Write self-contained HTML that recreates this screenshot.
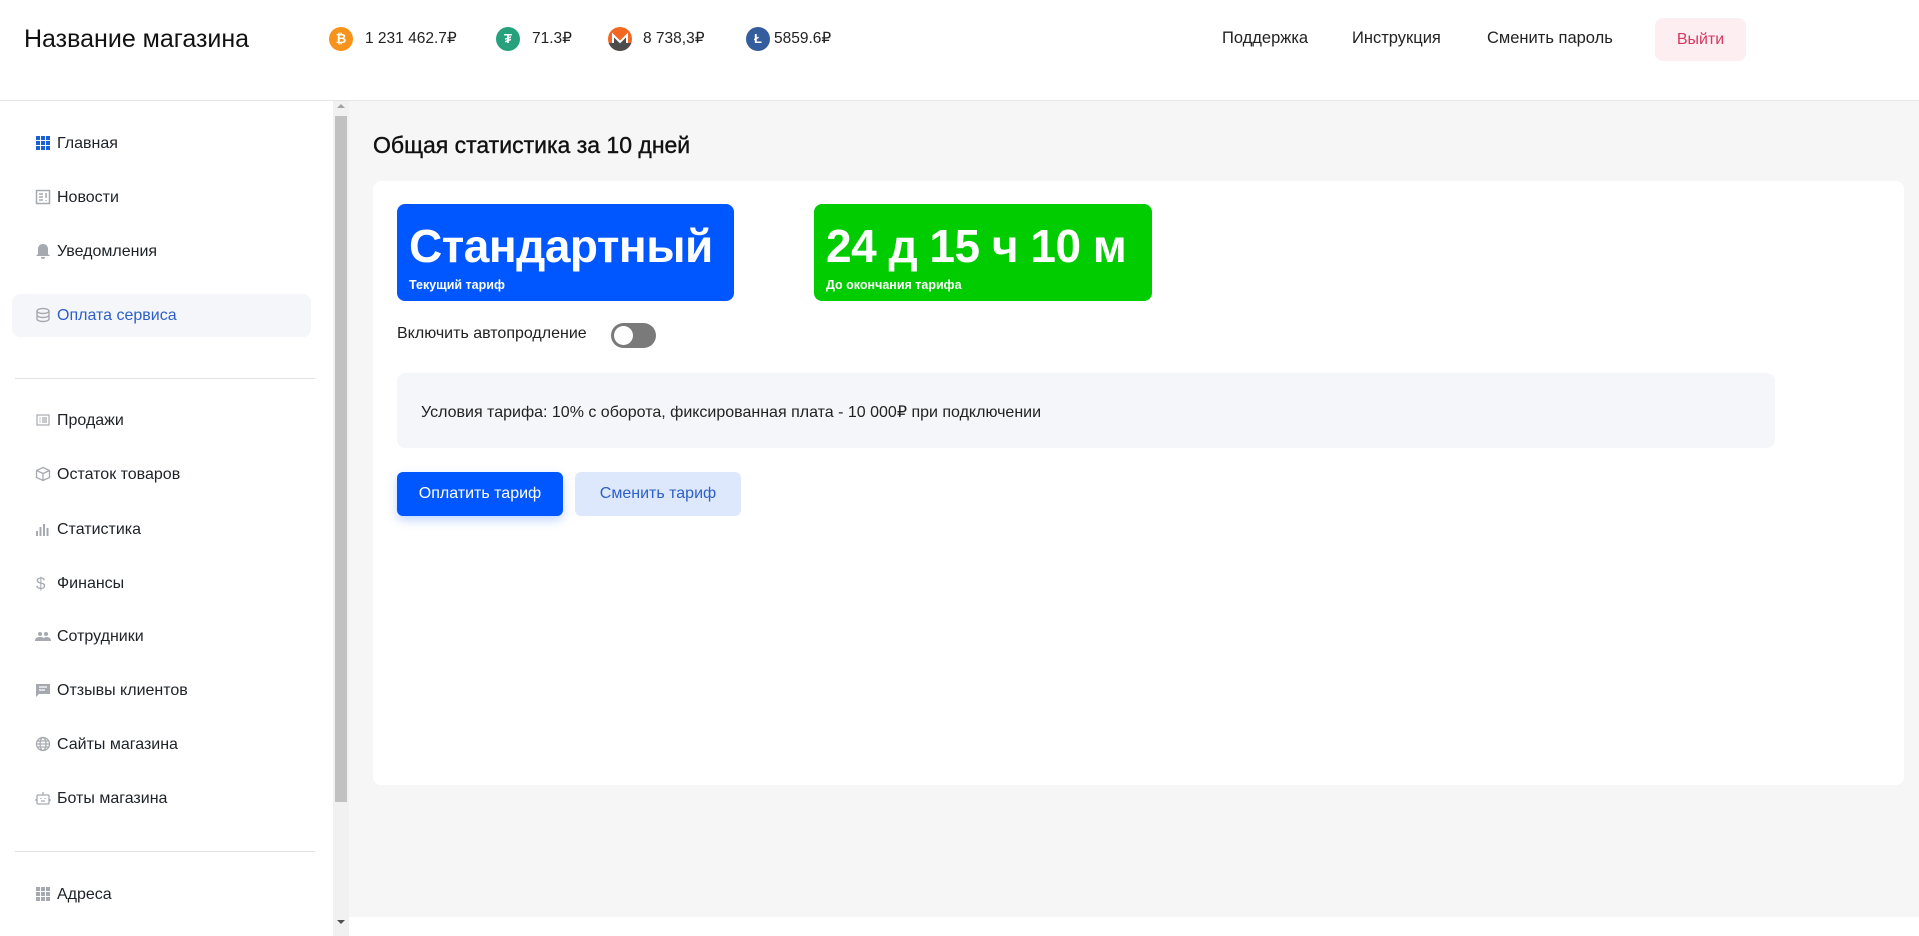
<!DOCTYPE html>
<html><head><meta charset="utf-8"><style>
*{box-sizing:border-box;margin:0;padding:0}
body{width:1919px;height:936px;overflow:hidden;background:#fff;font-family:"Liberation Sans",sans-serif;color:#1e2227;position:relative}
.abs{position:absolute}
.hdr{left:0;top:0;width:1919px;height:101px;border-bottom:1px solid #e6e6e6;background:#fff}
.logo{left:24px;top:25px;font-size:25px;color:#111}
.cr{top:30px;font-size:15.5px;color:#222;line-height:18px}
.ci{top:27px;width:24px;height:24px;border-radius:50%;color:#fff;font-size:13px;font-weight:bold;text-align:center;line-height:24px}
.nav{top:29px;font-size:16.5px;color:#222}
.out{left:1655px;top:18px;width:91px;height:43px;background:#fdeef2;border-radius:8px;color:#d8385f;font-size:16px;text-align:center;line-height:43px}
.side{left:0;top:101px;width:333px;height:835px;background:#fff}
.it{left:35px;font-size:16px;color:#1e2227;height:20px;line-height:20px}
.it span{position:absolute;left:22px;top:1px;white-space:nowrap}
.ic{position:absolute;left:0;top:2px;width:16px;height:16px}
.act{left:12px;top:294px;width:299px;height:43px;background:#f4f6fa;border-radius:8px}
.div{left:15px;width:300px;height:1px;background:#e3e3e3}
.sb{left:333px;top:101px;width:16px;height:835px;background:#f1f1f1}
.th{left:335px;top:116px;width:12px;height:686px;background:#c1c1c1}
.main{left:349px;top:101px;width:1570px;height:816px;background:#f6f6f6}
.title{left:373px;top:132px;font-size:23px;color:#111;-webkit-text-stroke:0.4px #111}
.card{left:373px;top:181px;width:1531px;height:604px;background:#fff;border-radius:8px}
.box{top:204px;width:337px;height:97px;border-radius:8px;color:#fff;overflow:hidden}
.box b{position:absolute;left:12px;top:15px;font-size:46px;line-height:54px;white-space:nowrap;letter-spacing:-0.5px}
.box i{position:absolute;left:12px;top:74px;font-size:12.5px;font-style:normal;font-weight:bold}
</style></head><body>
<div class="abs hdr"></div>
<div class="abs logo">Название магазина</div>
<div class="abs ci" style="left:329px;background:#f7931a">₿</div>
<div class="abs cr" style="left:365px">1 231 462.7₽</div>
<div class="abs ci" style="left:496px;background:#26a17b">₮</div>
<div class="abs cr" style="left:532px">71.3₽</div>
<div class="abs ci" style="left:608px;background:#f26822;overflow:hidden"><svg width="24" height="24" viewBox="0 0 24 24"><path d="M0 16h5V8l7 7 7-7v8h5v8H0z" fill="#4c4c4c"/><path d="M5 16V8l7 7 7-7v8" fill="none" stroke="#fff" stroke-width="2"/></svg></div>
<div class="abs cr" style="left:643px">8 738,3₽</div>
<div class="abs ci" style="left:746px;background:#345d9d">Ł</div>
<div class="abs cr" style="left:774px">5859.6₽</div>
<div class="abs nav" style="left:1222px">Поддержка</div>
<div class="abs nav" style="left:1352px">Инструкция</div>
<div class="abs nav" style="left:1487px">Сменить пароль</div>
<div class="abs out">Выйти</div>

<div class="abs side"></div>
<div class="abs act"></div>
<div class="abs it" style="top:133px"><svg class="ic" viewBox="0 0 16 16" fill="#1a5fd6"><rect x="1" y="1" width="4" height="4"/><rect x="6" y="1" width="4" height="4"/><rect x="11" y="1" width="4" height="4"/><rect x="1" y="6" width="4" height="4"/><rect x="6" y="6" width="4" height="4"/><rect x="11" y="6" width="4" height="4"/><rect x="1" y="11" width="4" height="4"/><rect x="6" y="11" width="4" height="4"/><rect x="11" y="11" width="4" height="4"/></svg><span>Главная</span></div>
<div class="abs it" style="top:187px"><svg class="ic" viewBox="0 0 16 16" fill="none" stroke="#a6aab0" stroke-width="1.5"><rect x="1.5" y="1.5" width="13" height="13"/><path d="M4 5h4M4 8h4M4 11h4M11 4v5M11 11v1"/></svg><span>Новости</span></div>
<div class="abs it" style="top:241px"><svg class="ic" viewBox="0 0 16 16" fill="#a6aab0"><path d="M8 1c-3 0-5 2-5 5v5l-2 2h14l-2-2V6c0-3-2-5-5-5zM6 14h4a2 2 0 0 1-4 0z"/></svg><span>Уведомления</span></div>
<div class="abs it" style="top:305px;color:#2d5fc8"><svg class="ic" viewBox="0 0 16 16" fill="none" stroke="#a6aab0" stroke-width="1.4"><ellipse cx="8" cy="4" rx="6" ry="2.5"/><path d="M2 4v8c0 1.4 2.7 2.5 6 2.5s6-1.1 6-2.5V4M2 8c0 1.4 2.7 2.5 6 2.5S14 9.4 14 8"/></svg><span>Оплата сервиса</span></div>
<div class="abs div" style="top:378px"></div>
<div class="abs it" style="top:410px"><svg class="ic" viewBox="0 0 16 16" fill="none" stroke="#a6aab0" stroke-width="1.2"><rect x="2" y="3" width="12" height="10"/><path d="M4.5 6h1M7 6h5M4.5 8h1M7 8h5M4.5 10h1M7 10h5"/></svg><span>Продажи</span></div>
<div class="abs it" style="top:464px"><svg class="ic" viewBox="0 0 16 16" fill="none" stroke="#a6aab0" stroke-width="1.3"><path d="M8 1.5l6.5 3v7L8 14.5 1.5 11.5v-7zM1.5 4.5L8 7.5l6.5-3M8 7.5v7"/></svg><span>Остаток товаров</span></div>
<div class="abs it" style="top:519px"><svg class="ic" viewBox="0 0 16 16" fill="#a6aab0"><rect x="1" y="10" width="2" height="5"/><rect x="4.5" y="6" width="2" height="9"/><rect x="8" y="3" width="2" height="12"/><rect x="11.5" y="7" width="2" height="8"/></svg><span>Статистика</span></div>
<div class="abs it" style="top:573px"><span style="left:1px;color:#a6aab0;font-size:17px">$</span><span>Финансы</span></div>
<div class="abs it" style="top:626px"><svg class="ic" viewBox="0 0 16 16" fill="#a6aab0"><circle cx="5" cy="6" r="2"/><circle cx="11" cy="6" r="2"/><path d="M0 13c0-3 2-4 5-4s5 1 5 4zM8 13c0-2 1-4 3-4 3 0 5 1 5 4z"/></svg><span>Сотрудники</span></div>
<div class="abs it" style="top:680px"><svg class="ic" viewBox="0 0 16 16" fill="#a6aab0"><path d="M1 2h14v10H4l-3 3z"/><path d="M4 5h8M4 8h6" stroke="#fff" stroke-width="1.2"/></svg><span>Отзывы клиентов</span></div>
<div class="abs it" style="top:734px"><svg class="ic" viewBox="0 0 16 16" fill="none" stroke="#a6aab0" stroke-width="1.3"><circle cx="8" cy="8" r="6.5"/><ellipse cx="8" cy="8" rx="3" ry="6.5"/><path d="M1.5 8h13M2.5 5h11M2.5 11h11"/></svg><span>Сайты магазина</span></div>
<div class="abs it" style="top:788px"><svg class="ic" viewBox="0 0 16 16" fill="none" stroke="#a6aab0" stroke-width="1.3"><rect x="2" y="5" width="12" height="9" rx="1"/><path d="M8 2v3M1 9v2M15 9v2M6 8v1M10 8v1M6 11h4"/></svg><span>Боты магазина</span></div>
<div class="abs div" style="top:851px"></div>
<div class="abs it" style="top:884px"><svg class="ic" viewBox="0 0 16 16" fill="#a6aab0"><rect x="1" y="1" width="4" height="4"/><rect x="6" y="1" width="4" height="4"/><rect x="11" y="1" width="4" height="4"/><rect x="1" y="6" width="4" height="4"/><rect x="6" y="6" width="4" height="4"/><rect x="11" y="6" width="4" height="4"/><rect x="1" y="11" width="4" height="4"/><rect x="6" y="11" width="4" height="4"/><rect x="11" y="11" width="4" height="4"/></svg><span>Адреса</span></div>

<div class="abs sb"></div>
<div class="abs th"></div>
<div class="abs" style="left:337px;top:104px;width:0;height:0;border:4px solid transparent;border-bottom:4px solid #a3a3a3;border-top:0"></div>
<div class="abs" style="left:337px;top:920px;width:0;height:0;border:4px solid transparent;border-top:4px solid #505050;border-bottom:0"></div>

<div class="abs main"></div>
<div class="abs title">Общая статистика за 10 дней</div>
<div class="abs card"></div>
<div class="abs box" style="left:397px;background:#0057ff"><b>Стандартный</b><i>Текущий тариф</i></div>
<div class="abs box" style="left:814px;background:#00cc00;width:338px"><b>24 д 15 ч 10 м</b><i>До окончания тарифа</i></div>
<div class="abs" style="left:397px;top:325px;font-size:16px;color:#222">Включить автопродление</div>
<div class="abs" style="left:611px;top:323px;width:45px;height:25px;border-radius:13px;background:#7a7a7a"><div style="position:absolute;left:3px;top:3px;width:19px;height:19px;border-radius:50%;background:#fff"></div></div>
<div class="abs" style="left:397px;top:373px;width:1378px;height:75px;background:#f5f6f9;border-radius:8px"></div>
<div class="abs" style="left:421px;top:402px;font-size:16px;color:#222">Условия тарифа: 10% с оборота, фиксированная плата - 10 000₽ при подключении</div>
<div class="abs" style="left:397px;top:472px;width:166px;height:44px;background:#0057ff;border-radius:6px;color:#fff;font-size:16px;text-align:center;line-height:44px;box-shadow:0 4px 10px rgba(0,87,255,.25)">Оплатить тариф</div>
<div class="abs" style="left:575px;top:472px;width:166px;height:44px;background:#dde8fd;border-radius:6px;color:#2d5fc8;font-size:16px;text-align:center;line-height:44px">Сменить тариф</div>
</body></html>
